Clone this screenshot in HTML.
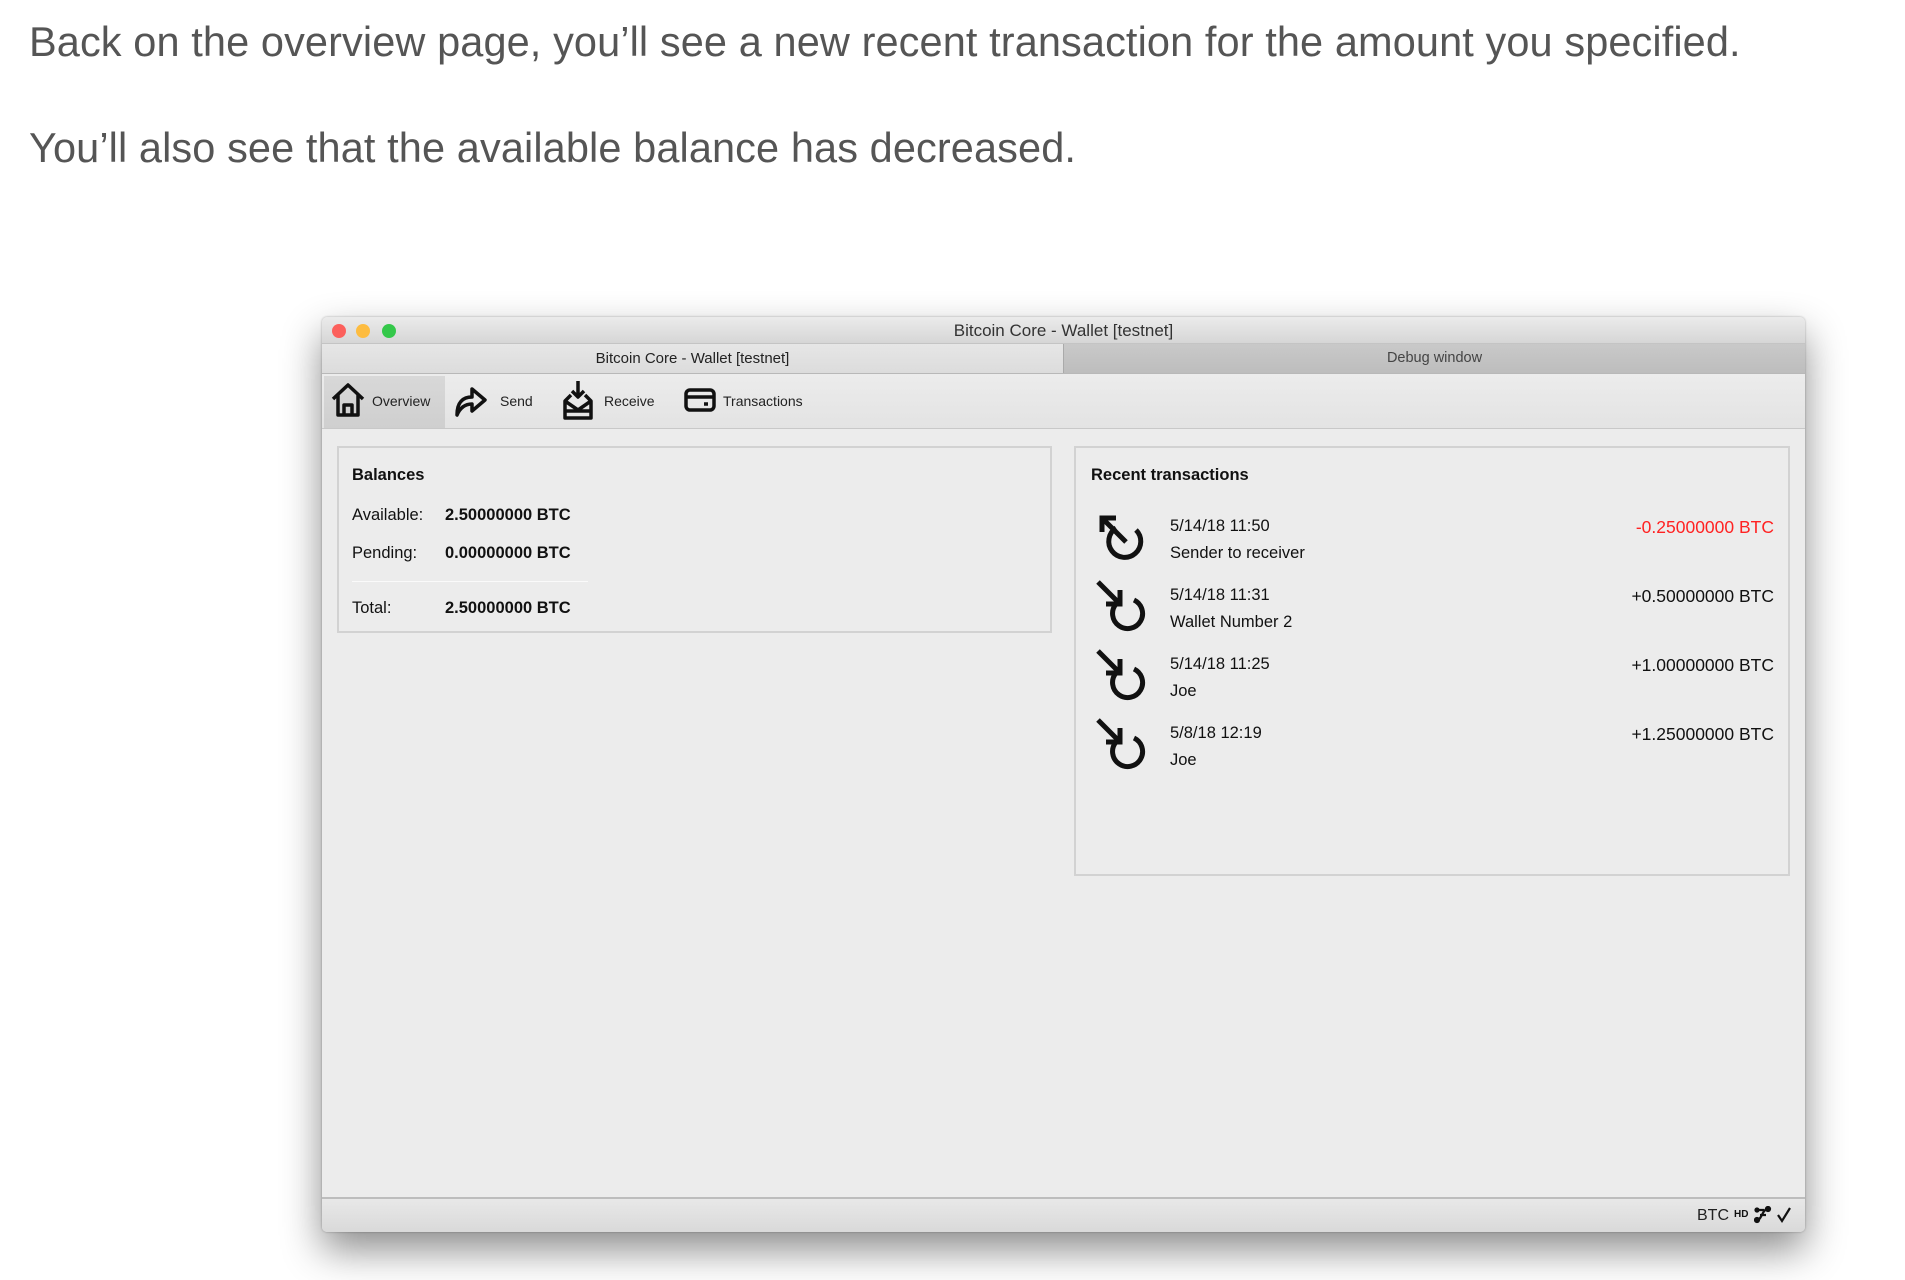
<!DOCTYPE html>
<html><head><meta charset="utf-8"><style>
*{margin:0;padding:0;box-sizing:border-box}
body{width:1905px;height:1280px;background:#fff;position:relative;overflow:hidden;font-family:"Liberation Sans",sans-serif}
.p{position:absolute;left:29px;font-size:41.5px;color:#555;white-space:nowrap;letter-spacing:0.1px}
.win{position:absolute;left:322px;top:317px;width:1483px;height:915px;background:#ececec;border-radius:5px;box-shadow:0 18px 40px rgba(0,0,0,.45),0 0 2px rgba(0,0,0,.3);overflow:hidden}
.a{position:absolute;white-space:nowrap}
.title{left:0;top:0;width:100%;height:27px;background:linear-gradient(#ebebeb,#d6d6d6);border-bottom:1px solid #c4c4c4}
.dot{position:absolute;top:7px;width:14px;height:14px;border-radius:50%}
.tabs{top:27px;left:0;width:100%;height:30px;border-bottom:1px solid #b8b8b8}
.tb{top:57px;left:0;width:100%;height:55px;background:linear-gradient(#ececec,#e3e3e3);border-bottom:1px solid #c8c8c8}
.box{position:absolute;border:2px solid #d2d2d2;background:#ececec}
.t15{font-size:16.5px;color:#111}
.amt{font-size:17.5px;color:#111}
.b{font-weight:bold}
</style></head><body>
<div class="p" style="top:18px">Back on the overview page, you’ll see a new recent transaction for the amount you specified.</div>
<div class="p" style="top:124px">You’ll also see that the available balance has decreased.</div>

<div class="win">
 <div class="a title">
  <div class="dot" style="left:10px;background:#fc605c"></div>
  <div class="dot" style="left:34px;background:#fdbc40"></div>
  <div class="dot" style="left:60px;background:#34c84a"></div>
  <div class="a" style="left:0;width:100%;text-align:center;top:4px;font-size:17px;color:#333">Bitcoin Core - Wallet [testnet]</div>
 </div>
 <div class="a tabs">
  <div class="a" style="left:0;top:0;width:741px;height:29px;background:linear-gradient(#e6e6e6,#dcdcdc);text-align:center;line-height:29px;font-size:15px;color:#222">Bitcoin Core - Wallet [testnet]</div>
  <div class="a" style="left:741px;top:0;width:742px;height:29px;background:linear-gradient(#c9c9c9,#bdbdbd);border-left:1px solid #aaa;text-align:center;line-height:29px;font-size:14.5px;color:#444">Debug window</div>
 </div>
 <div class="a tb">
  <div class="a" style="left:2px;top:2px;width:121px;height:52px;background:linear-gradient(#d8d8d8,#cfcfcf)"></div>
  <svg class="a" style="left:8px;top:8px" width="36" height="36" viewBox="0 0 36 36" fill="none" stroke="#111" stroke-width="3.5" stroke-linejoin="round"><path d="M3 17 L18 3 L33 17 M8 13 V33 H28 V13 M14 33 V23 H22 V33"/></svg>
  <div class="a" style="left:50px;top:19px;font-size:14px;color:#222">Overview</div>
  <svg class="a" style="left:132px;top:10px" width="34" height="34" viewBox="0 0 34 34" fill="none" stroke="#111" stroke-width="3.5" stroke-linejoin="round"><path d="M3 31 C3 18 9 13 18 13 V5 L31 16 L18 27 V20 C11 20 6 24 3 31Z"/></svg>
  <div class="a" style="left:178px;top:19px;font-size:14px;color:#222">Send</div>
  <svg class="a" style="left:240px;top:5px" width="32" height="42" viewBox="0 0 32 42" fill="none" stroke="#111" stroke-width="3.5" stroke-linejoin="round"><path d="M16 2 V18 M10 12 L16 18 L22 12 M9 16 L3 22 V39 H29 V22 L23 16 M3 22 L16 31 L29 22 M3 32 H29"/></svg>
  <div class="a" style="left:282px;top:19px;font-size:14px;color:#222">Receive</div>
  <svg class="a" style="left:362px;top:13px" width="32" height="26" viewBox="0 0 32 26" fill="none" stroke="#111" stroke-width="3.5"><rect x="2" y="3" width="28" height="20" rx="4"/><path d="M2 10 H30 M20 17 H24"/></svg>
  <div class="a" style="left:401px;top:19px;font-size:14px;color:#222">Transactions</div>
 </div>

 <div class="box" style="left:15px;top:129px;width:715px;height:187px">
  <div class="a t15 b" style="left:13px;top:18px">Balances</div>
  <div class="a t15" style="left:13px;top:58px">Available:</div><div class="a t15 b" style="left:106px;top:58px">2.50000000 BTC</div>
  <div class="a t15" style="left:13px;top:96px">Pending:</div><div class="a t15 b" style="left:106px;top:96px">0.00000000 BTC</div>
  <div class="a" style="left:13px;top:133px;width:236px;height:1px;background:#cfcfcf;border-bottom:1px solid #fafafa"></div>
  <div class="a t15" style="left:13px;top:151px">Total:</div><div class="a t15 b" style="left:106px;top:151px">2.50000000 BTC</div>
 </div>

 <div class="box" style="left:752px;top:129px;width:716px;height:430px">
  <div class="a t15 b" style="left:15px;top:18px">Recent transactions</div>
  <svg class="a" style="left:18px;top:62px" width="56" height="56" viewBox="0 0 56 56" fill="none" stroke="#111" stroke-width="5"><path d="M22 18 A16 16 0 1 0 42 20"/><path d="M32 32 L8 8 M8 22 V8 H22"/></svg>
  <div class="a t15" style="left:94px;top:69px">5/14/18 11:50</div><div class="a t15" style="left:94px;top:96px">Sender to receiver</div>
  <div class="a amt" style="right:14px;top:69px;color:#f22">-0.25000000 BTC</div>
  <svg class="a" style="left:18px;top:128px" width="56" height="56" viewBox="0 0 56 56" fill="none" stroke="#111" stroke-width="5"><path d="M40 24 A15 15 0 1 1 22 28"/><path d="M4 6 L26 28 M12 28 H26 V14"/></svg>
  <div class="a t15" style="left:94px;top:138px">5/14/18 11:31</div><div class="a t15" style="left:94px;top:165px">Wallet Number 2</div>
  <div class="a amt" style="right:14px;top:138px">+0.50000000 BTC</div>
  <svg class="a" style="left:18px;top:197px" width="56" height="56" viewBox="0 0 56 56" fill="none" stroke="#111" stroke-width="5"><path d="M40 24 A15 15 0 1 1 22 28"/><path d="M4 6 L26 28 M12 28 H26 V14"/></svg>
  <div class="a t15" style="left:94px;top:207px">5/14/18 11:25</div><div class="a t15" style="left:94px;top:234px">Joe</div>
  <div class="a amt" style="right:14px;top:207px">+1.00000000 BTC</div>
  <svg class="a" style="left:18px;top:266px" width="56" height="56" viewBox="0 0 56 56" fill="none" stroke="#111" stroke-width="5"><path d="M40 24 A15 15 0 1 1 22 28"/><path d="M4 6 L26 28 M12 28 H26 V14"/></svg>
  <div class="a t15" style="left:94px;top:276px">5/8/18 12:19</div><div class="a t15" style="left:94px;top:303px">Joe</div>
  <div class="a amt" style="right:14px;top:276px">+1.25000000 BTC</div>
 </div>

 <div class="a" style="left:0;top:880px;width:100%;height:35px;background:linear-gradient(#e8e8e8,#d9d9d9);border-top:2px solid #bdbdbd">
  <div class="a" style="left:1375px;top:8px;font-size:16px;color:#222">BTC</div>
  <div class="a" style="left:1412px;top:10px;font-size:10px;font-weight:bold;color:#111">HD</div>
  <svg class="a" style="left:1432px;top:7px" width="20" height="18" viewBox="0 0 20 18" fill="none" stroke="#111" stroke-width="2.2"><circle cx="3" cy="14" r="2" fill="#111"/><circle cx="14" cy="3" r="2" fill="#111"/><circle cx="3" cy="4" r="1.5" fill="#111"/><path d="M3 14 C8 14 8 3 14 3 M3 4 H10 M6 9 H12"/></svg>
  <svg class="a" style="left:1454px;top:7px" width="16" height="18" viewBox="0 0 16 18" fill="none" stroke="#111" stroke-width="2.2"><path d="M2 9 L6 15 L14 2"/></svg>
 </div>
</div>
</body></html>
